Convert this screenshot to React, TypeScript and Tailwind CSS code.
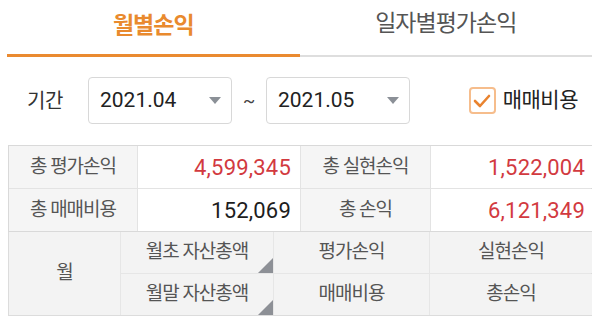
import React from "react";

const FONT = "font-['Roboto','Noto_Sans_CJK_KR',sans-serif]";

function Caret() {
  return (
    <svg width="12" height="7" viewBox="0 0 12 7" className="shrink-0">
      <path d="M0 0 L12 0 L6 7 Z" fill="#8b9097" />
    </svg>
  );
}

function Select({ value }: { value: string }) {
  return (
    <div className="w-[144px] h-[47px] rounded-[4px] border border-[#d8d8d8] bg-white flex items-center justify-between pl-[11px] pr-[10px]">
      <span className="text-[21px] text-[#222]">{value}</span>
      <Caret />
    </div>
  );
}

function Corner() {
  // 정렬 표시용 삼각형
  return (
    <svg width="15" height="15" viewBox="0 0 15 15" className="absolute right-0 bottom-0">
      <path d="M15 0 L15 15 L0 15 Z" fill="#8d9096" />
    </svg>
  );
}

export default function App() {
  return (
    <div className={`w-[600px] h-[318px] bg-white overflow-hidden ${FONT}`}>
      {/* 탭 */}
      <div className="flex pl-[7px] pr-[8px]">
        <div className="flex-1 h-[57px] flex flex-col">
          <div className="flex-1 flex items-center justify-center pb-[2px] text-[23px] font-bold tracking-[-1px] text-[#e98a2e]">
            월별손익
          </div>
          <div className="h-[3px] bg-[#ea8a30]" />
        </div>
        <div className="flex-1 h-[57px] flex flex-col">
          <div className="flex-1 flex items-center justify-center pb-[6px] text-[23px] tracking-[-1px] text-[#555]">
            일자별평가손익
          </div>
          <div className="h-[2px] bg-[#dedede]" />
        </div>
      </div>

      {/* 기간 */}
      <div className="flex items-center pt-[20px] pl-[27px] pr-[22px]">
        <span className="text-[20px] tracking-[-0.5px] text-[#333] w-[61px]">기간</span>
        <Select value="2021.04" />
        <span className="w-[34px] text-center text-[18px] text-[#444]">~</span>
        <Select value="2021.05" />
        <div className="ml-auto flex items-center gap-[7px]">
          <div className="w-[27px] h-[27px] rounded-[4px] border-2 border-[#f6bd8c] flex items-center justify-center">
            <svg width="18" height="14" viewBox="0 0 18 14">
              <path d="M2 7 L7 12 L16 2" fill="none" stroke="#e9832f" strokeWidth="2.6" strokeLinecap="round" strokeLinejoin="round" />
            </svg>
          </div>
          <span className="text-[21px] tracking-[-0.5px] text-[#222]">매매비용</span>
        </div>
      </div>

      {/* 합계 */}
      <div className="mt-[21px] mx-[8px] border border-[#d9d9d9] bg-[#e3e3e3] grid grid-cols-[128px_162px_129px_161px] grid-rows-[42px_42px] gap-px text-[19px] tracking-[-1px]">
        <div className="bg-[#f5f5f5] flex items-center justify-center text-[#555]">총 평가손익</div>
        <div className="bg-white flex items-center justify-end pr-[9px] text-[22px] tracking-[0.2px] text-[#d23a3f]">4,599,345</div>
        <div className="bg-[#f5f5f5] flex items-center justify-center text-[#555]">총 실현손익</div>
        <div className="bg-white flex items-center justify-end pr-[7px] text-[22px] tracking-[0.2px] text-[#d23a3f]">1,522,004</div>
        <div className="bg-[#f5f5f5] flex items-center justify-center text-[#555]">총 매매비용</div>
        <div className="bg-white flex items-center justify-end pr-[9px] text-[22px] tracking-[0.2px] text-[#1d1d1d]">152,069</div>
        <div className="bg-[#f5f5f5] flex items-center justify-center text-[#555]">총 손익</div>
        <div className="bg-white flex items-center justify-end pr-[7px] text-[22px] tracking-[0.2px] text-[#d23a3f]">6,121,349</div>
      </div>

      {/* 헤더 */}
      <div className="mx-[8px] border-x border-b border-[#dcdcdc] bg-[#e6e6e6] grid grid-cols-[111px_152px_155px_162px] grid-rows-[41px_41px] gap-px text-[19px] tracking-[-1px] text-[#555]">
        <div className="row-span-2 bg-[#f3f3f3] flex items-center justify-center">월</div>
        <div className="relative bg-[#f3f3f3] flex items-center justify-center">
          월초 자산총액
          <Corner />
        </div>
        <div className="bg-[#f3f3f3] flex items-center justify-center">평가손익</div>
        <div className="bg-[#f3f3f3] flex items-center justify-center">실현손익</div>
        <div className="relative bg-[#f3f3f3] flex items-center justify-center">
          월말 자산총액
          <Corner />
        </div>
        <div className="bg-[#f3f3f3] flex items-center justify-center">매매비용</div>
        <div className="bg-[#f3f3f3] flex items-center justify-center">총손익</div>
      </div>
    </div>
  );
}
